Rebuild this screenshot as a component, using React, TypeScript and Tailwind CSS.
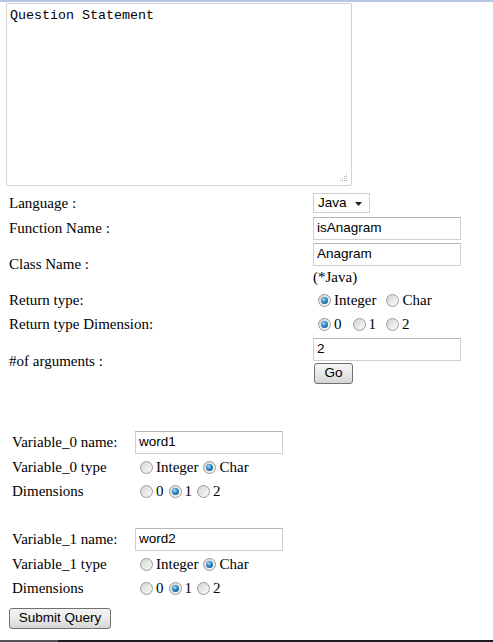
import React from "react";

const serif = { fontFamily: '"Liberation Serif", "Times New Roman", serif' };

function Radio({ checked, ml = 5 }: { checked?: boolean; ml?: number }) {
  return (
    <span
      className="inline-flex shrink-0 w-[13px] h-[13px] rounded-full border border-[#9a9a9a] bg-gradient-to-br from-[#d4d4d4] to-[#fbfbfb] items-center justify-center mr-[3px]"
      style={{ marginLeft: ml }}
    >
      {checked && (
        <span className="w-[7px] h-[7px] rounded-full bg-[radial-gradient(circle_at_40%_35%,#a9dcf7_0%,#2a84c0_45%,#0d4f82_100%)]" />
      )}
    </span>
  );
}

function TextInput({ value, w = 148 }: { value: string; w?: number }) {
  return (
    <div
      className="h-[23px] border border-[#cfcfcf] border-t-[#b5b5b5] bg-white flex items-center pl-[3px] text-[13.5px] text-black"
      style={{ width: w, fontFamily: '"Liberation Sans", Arial, sans-serif' }}
    >
      {value}
    </div>
  );
}

function Button({ label, w }: { label: string; w: number }) {
  return (
    <div
      className="h-[21px] border border-[#707070] rounded-[3px] bg-gradient-to-b from-[#f4f4f4] via-[#e9e9e9] to-[#d5d5d5] flex items-center justify-center text-[13.5px] text-black"
      style={{ width: w, fontFamily: '"Liberation Sans", Arial, sans-serif' }}
    >
      {label}
    </div>
  );
}

function Label({ children }: { children: React.ReactNode }) {
  return (
    <div className="flex items-center text-[15px] text-black whitespace-nowrap" style={serif}>
      {children}
    </div>
  );
}

export default function App() {
  return (
    <div className="relative w-[493px] h-[642px] bg-white overflow-hidden border-t-2 border-[#b4c6e4] flex flex-col">
      {/* Textarea */}
      <div
        className="ml-[6px] mt-[1px] w-[346px] h-[183px] border border-[#d4d4d4] rounded-[2px] relative pl-[3px] pt-[4px] text-[13.33px] text-black leading-[16px]"
        style={{ fontFamily: '"Liberation Mono", "Courier New", monospace' }}
      >
        Question Statement
        <svg className="absolute right-[3px] bottom-[3px]" width="9" height="9" viewBox="0 0 9 9">
          <g fill="#b0b0b0">
            <rect x="7" y="1" width="1" height="1" />
            <rect x="5" y="3" width="1" height="1" />
            <rect x="7" y="3" width="1" height="1" />
            <rect x="3" y="5" width="1" height="1" />
            <rect x="5" y="5" width="1" height="1" />
            <rect x="7" y="5" width="1" height="1" />
            <rect x="1" y="7" width="1" height="1" />
            <rect x="3" y="7" width="1" height="1" />
            <rect x="5" y="7" width="1" height="1" />
            <rect x="7" y="7" width="1" height="1" />
          </g>
        </svg>
      </div>

      {/* First table */}
      <div className="mt-[5px] pl-[9px] grid grid-cols-[304px_1fr]">
        <Label>Language :</Label>
        <div className="h-[24px] flex items-center">
          <div
            className="w-[57px] h-[20px] border border-[#cfcfcf] flex items-center pl-[4px] text-[13.5px] text-black relative"
            style={{ fontFamily: '"Liberation Sans", Arial, sans-serif' }}
          >
            Java
            <svg className="absolute right-[7px] top-[8px]" width="7" height="4" viewBox="0 0 7 4">
              <path d="M0 0 H7 L3.5 4 Z" fill="#222" />
            </svg>
          </div>
        </div>

        <Label>Function Name :</Label>
        <div className="h-[26px] flex items-center">
          <TextInput value="isAnagram" />
        </div>

        <Label>Class Name :</Label>
        <div className="h-[47px] flex flex-col pt-[2px]">
          <TextInput value="Anagram" />
          <div className="text-[15px] text-black leading-[20px] mt-[1px]" style={serif}>(*Java)</div>
        </div>

        <Label>Return type:</Label>
        <div className="h-[24px] flex items-center text-[15px] text-black" style={serif}>
          <Radio checked />
          <span>Integer</span>
          <Radio ml={10} />
          <span>Char</span>
        </div>

        <Label>Return type Dimension:</Label>
        <div className="h-[24px] flex items-center text-[15px] text-black" style={serif}>
          <Radio checked />
          <span>0</span>
          <Radio ml={11} />
          <span>1</span>
          <Radio ml={10} />
          <span>2</span>
        </div>

        <Label>#of arguments :</Label>
        <div className="h-[50px] flex flex-col pt-[2px] gap-[2px]">
          <TextInput value="2" />
          <div className="ml-[1px]">
            <Button label="Go" w={39} />
          </div>
        </div>
      </div>

      {/* Variables */}
      <div className="mt-[43px] pl-[12px] grid grid-cols-[123px_1fr]">
        {[0, 1].map((i) => (
          <React.Fragment key={i}>
            <Label>{`Variable_${i} name:`}</Label>
            <div className="h-[26px] flex items-center">
              <TextInput value={i === 0 ? "word1" : "word2"} />
            </div>

            <Label>{`Variable_${i} type`}</Label>
            <div className="h-[24px] flex items-center text-[15px] text-black" style={serif}>
              <Radio />
              <span>Integer</span>
              <Radio checked ml={5} />
              <span>Char</span>
            </div>

            <Label>Dimensions</Label>
            <div className="h-[25px] flex items-center text-[15px] text-black" style={serif}>
              <Radio />
              <span>0</span>
              <Radio checked ml={5} />
              <span>1</span>
              <Radio ml={5} />
              <span>2</span>
            </div>

            {i === 0 && <div className="col-span-2 h-[22px]" />}
          </React.Fragment>
        ))}
      </div>

      <div className="mt-[7px] ml-[9px]">
        <Button label="Submit Query" w={102} />
      </div>

      <div className="mt-auto h-[2px] flex">
        <div className="w-[58px] bg-[#555555]" />
        <div className="flex-1 bg-[#1c1c1c]" />
      </div>
    </div>
  );
}
